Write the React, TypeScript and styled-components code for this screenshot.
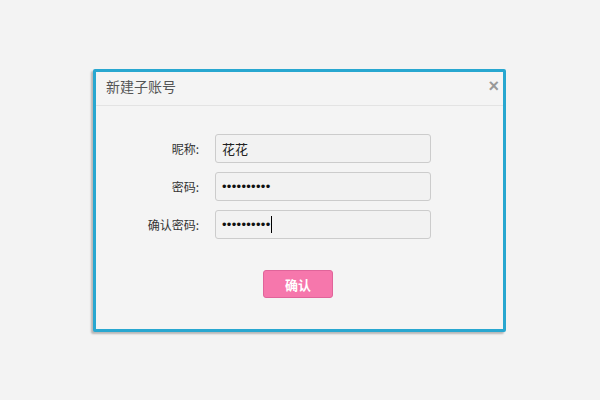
import React from "react";
import styled, { createGlobalStyle } from "styled-components";

const Global = createGlobalStyle`
  html, body { margin: 0; padding: 0; background: #f3f3f3; }
  body { font-family: "Liberation Sans", "Noto Sans CJK SC", sans-serif; }
`;

const Page = styled.div`
  width: 600px;
  height: 400px;
  box-sizing: border-box;
  padding: 69px 0 0 93px;
`;

const Dialog = styled.div`
  width: 413px;
  height: 263px;
  box-sizing: border-box;
  border: 3px solid #28a7d0;
  border-radius: 2px;
  background: #f4f4f4;
  box-shadow: -2px 2px 2px rgba(0, 0, 0, 0.25);
  display: flex;
  flex-direction: column;
`;

const Header = styled.div`
  height: 34px;
  box-sizing: border-box;
  border-bottom: 1px solid #e3e3e3;
  display: flex;
  align-items: center;
  justify-content: space-between;
  padding: 0 4px 5px 10px;
`;

const Title = styled.div`
  font-size: 14px;
  color: #555;
  font-family: "Noto Sans CJK SC", sans-serif;
`;

const Close = styled.div`
  font-size: 18px;
  font-weight: bold;
  color: #999;
  line-height: 1;
  margin-top: -1px;
`;

const Form = styled.div`
  display: grid;
  grid-template-columns: 103px 216px;
  column-gap: 16px;
  row-gap: 9px;
  padding-top: 28px;
`;

const Label = styled.div`
  text-align: right;
  font-size: 12px;
  color: #333;
  line-height: 29px;
  font-family: "Noto Sans CJK SC", sans-serif;
`;

const Field = styled.div`
  height: 29px;
  box-sizing: border-box;
  border: 1px solid #cccccc;
  border-radius: 3px;
  background: #f2f2f2;
  padding-left: 6px;
  display: flex;
  align-items: center;
  font-size: 13px;
  color: #222;
  font-family: "Noto Sans CJK SC", sans-serif;
`;

const Dots = styled.span`
  font-family: "Liberation Sans", sans-serif;
  font-size: 13px;
  letter-spacing: 0.3px;
  color: #111;
`;

const Caret = styled.span`
  display: inline-block;
  width: 1px;
  height: 17px;
  background: #000;
`;

const Actions = styled.div`
  display: flex;
  justify-content: center;
  padding-top: 31px;
  padding-right: 3px;
`;

const Button = styled.button`
  width: 70px;
  height: 28px;
  border: 1px solid #e0649a;
  border-radius: 3px;
  background: #f677ac;
  color: #fff;
  font-size: 13px;
  font-weight: bold;
  font-family: "Noto Sans CJK SC", sans-serif;
  padding: 0;
`;

export default function App() {
  return (
    <Page>
      <Global />
      <Dialog>
        <Header>
          <Title>新建子账号</Title>
          <Close>×</Close>
        </Header>
        <Form>
          <Label>昵称:</Label>
          <Field>花花</Field>
          <Label>密码:</Label>
          <Field>
            <Dots>••••••••••</Dots>
          </Field>
          <Label>确认密码:</Label>
          <Field>
            <Dots>••••••••••</Dots>
            <Caret />
          </Field>
        </Form>
        <Actions>
          <Button>确认</Button>
        </Actions>
      </Dialog>
    </Page>
  );
}
